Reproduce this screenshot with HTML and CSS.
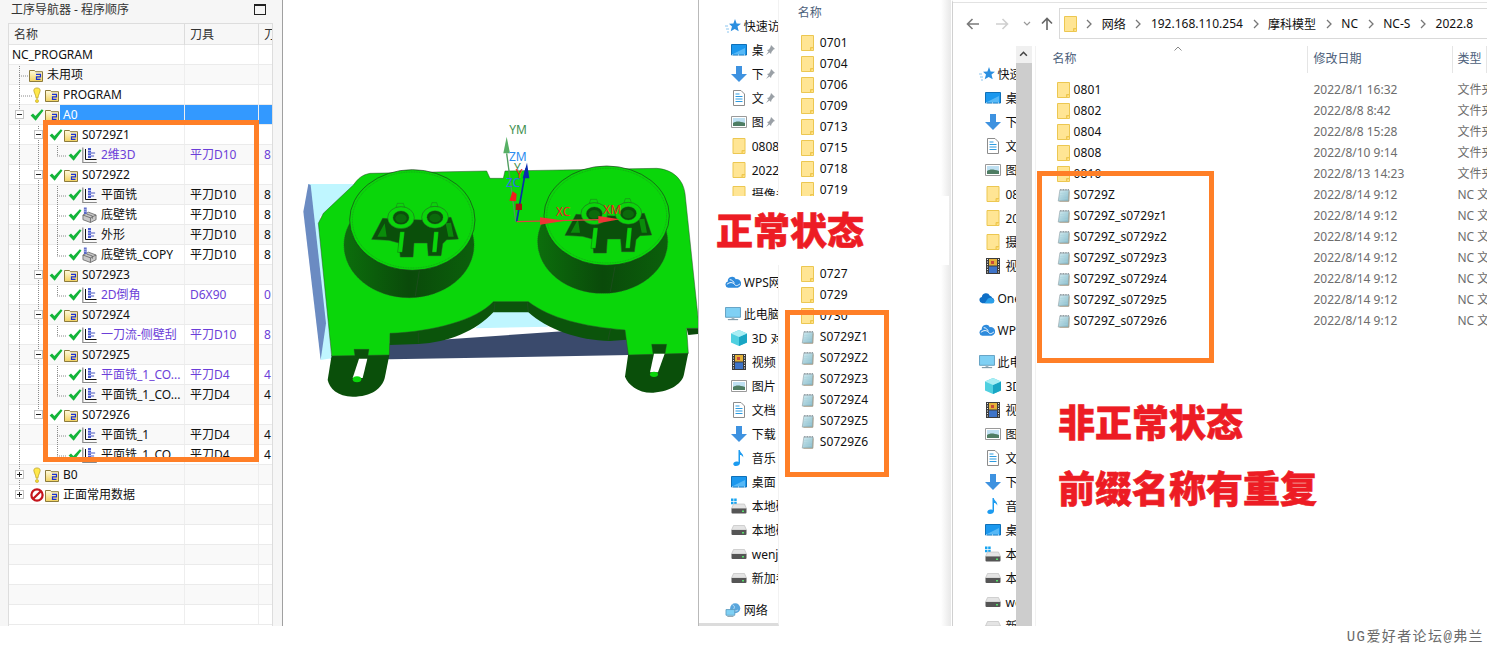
FILE: index.html
```html
<!DOCTYPE html>
<html lang="zh-CN">
<head>
    <meta charset="UTF-8">
    <title>工序导航器</title>
    <link rel="stylesheet" href="styles.css">
</head>
<body>
    <!-- shared icons -->
    <svg class="defs" width="0" height="0">
        <defs>
            <linearGradient id="nx-yellow" x1="0" y1="0" x2="0" y2="1">
                <stop offset="0" stop-color="#fffbe0"/>
                <stop offset="1" stop-color="#f2d25e"/>
            </linearGradient>
            <linearGradient id="sheet" x1="0" y1="0" x2="1" y2="1">
                <stop offset="0" stop-color="#d5edf2"/>
                <stop offset="1" stop-color="#83b8c8"/>
            </linearGradient>
            <linearGradient id="wall" x1="0" y1="0" x2="1" y2="0">
                <stop offset="0" stop-color="#0c6e0c"/>
                <stop offset=".5" stop-color="#0a4a0a"/>
                <stop offset="1" stop-color="#0b600b"/>
            </linearGradient>
            <symbol id="i-folder" viewBox="0 0 14 14">
                <path d="M.5 2.5h5l1 1.2h7v9.8H.5z" fill="url(#nx-yellow)" stroke="#8c7b3c"/>
                <path d="M7 6.3h4.5v2.6H7.5v2.5h4" fill="none" stroke="#1a2fd0" stroke-width="1.2"/>
            </symbol>
            <symbol id="i-check" viewBox="0 0 14 14">
                <path d="M.6 7.4 3 5.5l2.4 2.6L11.8 1.3l1.7 1.3-7.8 10.2z" fill="#14b53a"/>
            </symbol>
            <symbol id="i-warn" viewBox="0 0 8 16">
                <path d="M.8 3.2C.8.2 7.2.2 7.2 3.2c0 2.2-2 4.6-2.3 8H3.1C2.8 7.8.8 5.4.8 3.2z" fill="#ffe84a" stroke="#b59a1c" stroke-width=".7"/>
                <circle cx="4" cy="14" r="1.6" fill="#f4d92e" stroke="#b59a1c" stroke-width=".5"/>
            </symbol>
            <symbol id="i-stop" viewBox="0 0 15 15">
                <circle cx="7.5" cy="7.5" r="6" fill="#fff" stroke="#c4161c" stroke-width="2.4"/>
                <path d="M3.4 11.6 11.6 3.4" stroke="#c4161c" stroke-width="2.4"/>
            </symbol>
            <symbol id="i-op" viewBox="0 0 15 16">
                <path d="M.8.5v15h14" fill="none" stroke="#8a8a8a" stroke-width="1.2"/>
                <path d="M3.5 2v10.5h11" fill="none" stroke="#111" stroke-width="1"/>
                <path d="M6 1h3v10H6z" fill="#4b5bd0"/>
                <path d="M6 3.5h3M6 6h3M6 8.5h3M9 6h5M9 9h4" stroke="#dfe3ff" stroke-width=".7"/>
                <path d="M9 6h4M9 9h3" stroke="#2a3ab0" stroke-width=".8"/>
            </symbol>
            <symbol id="i-block" viewBox="0 0 16 16">
                <path d="M1 8 7 5l8 3v5l-6 3-8-3z" fill="#c9c9c9" stroke="#5c5c5c" stroke-width=".8"/>
                <path d="M1 8l8 3 6-3M9 11v5M5 7l6 2v3" fill="none" stroke="#5c5c5c" stroke-width=".8"/>
                <path d="M2 0h3v7H2z" fill="#5a6ac8"/>
                <path d="M2 2h3M2 4h3" stroke="#dfe3ff" stroke-width=".6"/>
            </symbol>
            <symbol id="i-dir" viewBox="0 0 13 16">
                <path d="M.5.5h12v15H.5z" fill="#ffe594" stroke="#ecc751"/>
                <path d="M9.5 15.5v-3h3" fill="#ffd45e" stroke="#ecc751"/>
            </symbol>
            <symbol id="i-nc" viewBox="0 0 16 16">
                <path d="M3.5 2H15l-.6 13.5H1.5z" fill="url(#sheet)" stroke="#8b9aa0" stroke-width=".7"/>
                <path d="M15 3.5l-.5 12.3H3" fill="none" stroke="#a3967a" stroke-width=".9"/>
                <path d="M3.6 1.5H15" stroke="#5f6f78" stroke-width="1.4" stroke-dasharray="1 1"/>
                <path d="M4 6h9M3.6 9h9.2M3.3 12h9.3" stroke="#a9d2dc" stroke-width=".7"/>
            </symbol>
            <symbol id="i-star" viewBox="0 0 16 14">
                <path d="M10 0l1.6 4.4 4.4.3-3.5 2.9 1.2 4.7L9.7 10l-4 2.3 1.3-4.7-3-2.8 4.4-.3z" fill="#2b8fe0"/>
                <path d="M0 7h3M1 10h3M2 13h2" stroke="#8cc6f0"/>
            </symbol>
            <symbol id="i-desk" viewBox="0 0 16 12">
                <path d="M.5.5h15v10.500H.5z" fill="#1b98ee" stroke="#0f70b8"/>
                <path d="M1 10.500 14 4v6.500z" fill="#57b8f6"/>
                <path d="M1 11h14" stroke="#e8f4fc" stroke-dasharray="1 5"/>
            </symbol>
            <symbol id="i-down" viewBox="0 0 16 16">
                <path d="M5 0h6v8h5l-8 8-8-8h5z" fill="#3e92e0"/>
            </symbol>
            <symbol id="i-doc" viewBox="0 0 12 16">
                <path d="M.5.5h7.500l3.500 3.500v11.500H.5z" fill="#fff" stroke="#8c8c8c"/>
                <path d="M2.500 4h4M2.500 6.500h7M2.500 9h7M2.500 11.500h7" stroke="#2d9be0"/>
            </symbol>
            <symbol id="i-pic" viewBox="0 0 16 12">
                <path d="M.5.5h15v11H.5z" fill="#fff" stroke="#9a9a9a"/>
                <path d="M2 2h12v8H2z" fill="#bfe0f2"/>
                <path d="M2 7c3-2 6-2 12 0v3H2z" fill="#4e7d63"/>
            </symbol>
            <symbol id="i-film" viewBox="0 0 14 16">
                <path d="M0 0h14v16H0z" fill="#3c3c3c"/>
                <path d="M3 1h8v6.500H3z" fill="#e4b23a"/>
                <path d="M3 8.500h8V15H3z" fill="#3f74c8"/>
                <path d="M5 3h3v3H5z" fill="#c84a3a"/>
                <path d="M1.500 1v14M12.500 1v14" stroke="#eee" stroke-dasharray="1 1.500"/>
            </symbol>
            <symbol id="i-cube" viewBox="0 0 16 16">
                <path d="M8 0l8 3.500v9L8 16l-8-3.500v-9z" fill="#4fd0e0"/>
                <path d="M8 7l8-3.500v9L8 16z" fill="#19a6c4"/>
                <path d="M8 0l8 3.500L8 7 0 3.500z" fill="#a8eef4"/>
            </symbol>
            <symbol id="i-note" viewBox="0 0 12 16">
                <path d="M5.500 0h1.300c.4 3 4 3.500 3.400 7.500C9.500 5.500 8 5 7 5v8c0 2-2 3-4 3-2.500 0-3.500-2-2-3.500 1-1 3-1.200 4.500-.5z" fill="#1c9bf0"/>
            </symbol>
            <symbol id="i-drive" viewBox="0 0 16 10">
                <path d="M2.500.5h11L15.500 5H.5z" fill="#e4e4e4" stroke="#bbb" stroke-width=".6"/>
                <path d="M.5 5h15v4a1 1 0 0 1-1 1h-13a1 1 0 0 1-1-1z" fill="#555"/>
                <path d="M11 7h2v1.500h-2z" fill="#56e06a"/>
            </symbol>
            <symbol id="i-sys" viewBox="0 0 16 15">
                <path d="M0 0h2.500v2.500H0zM3.200 0h2.500v2.500H3.200zM0 3.200h2.500v2.500H0zM3.200 3.200h2.500v2.500H3.200z" fill="#18a4f0"/>
                <path d="M2.500 5.500h11L15.500 10H.5z" fill="#e4e4e4" stroke="#bbb" stroke-width=".6"/>
                <path d="M.5 10h15v4a1 1 0 0 1-1 1h-13a1 1 0 0 1-1-1z" fill="#555"/>
                <path d="M11 12h2v1.500h-2z" fill="#56e06a"/>
            </symbol>
            <symbol id="i-pc" viewBox="0 0 17 15">
                <path d="M.5.5h16v10.500H.5z" fill="#7fd0f4" stroke="#5e9dc0"/>
                <path d="M7 11h3v2H7z" fill="#9bb4c2"/>
                <path d="M3 13.500h11" stroke="#7f98a6" stroke-width="1.200"/>
            </symbol>
            <symbol id="i-net" viewBox="0 0 17 16">
                <circle cx="11" cy="6" r="5.800" fill="#5aa6dc"/>
                <path d="M8 2c2 1 3 3 1 5s3 3 5 1" fill="none" stroke="#cfe8f8"/>
                <path d="M.5 7.500h10v6.500H.5z" fill="#7fd0f4" stroke="#5e9dc0"/>
                <path d="M2 15.500h7" stroke="#7f98a6"/>
            </symbol>
            <symbol id="i-drive-cloud" viewBox="0 0 17 11">
                <path d="M3.500 11A3.300 3.300 0 0 1 3 4.500 4.500 4.500 0 0 1 11.500 3 3.200 3.200 0 0 1 14 5.200 3 3 0 0 1 14 11z" fill="#0f6fc6"/>
                <path d="M6 11l3.500-5c2-1 4-.8 5 .2a2.500 2.500 0 0 1 0 4.800z" fill="#2ba0ea"/>
            </symbol>
            <symbol id="i-wps" viewBox="0 0 17 12">
                <path d="M3.500 12A3.300 3.300 0 0 1 3 5.500 4.500 4.500 0 0 1 11.500 3 3.800 3.800 0 0 1 13.500 12z" fill="#2e8bdc"/>
                <path d="M2 8.500c3-2.500 6-2.500 8 0s3.500 1 6-.5M5 3.500c2.500 0 4 2 5 4" fill="none" stroke="#fff"/>
            </symbol>
            <symbol id="i-pin" viewBox="0 0 10 10">
                <path d="M6 0l4 4-1.500.5L6.500 7 6 9 4.500 7.500 1 10l2.500-3.500L2 5l2-.5L5.500 2z" fill="#9aa0a6"/>
            </symbol>
            <symbol id="i-crumb" viewBox="0 0 6 10">
                <path d="M1 1l4 4-4 4" fill="none" stroke="#777" stroke-width="1.300"/>
            </symbol>
        </defs>
    </svg>

    <div class="page">
        <!-- operation navigator -->
        <section class="navigator">
            <div class="nav-title">
                <span>工序导航器 - 程序顺序</span>
                <span class="maximize"></span>
            </div>
            <div class="tree">
                <div class="tree-head">
                    <div>名称</div>
                    <div>刀具</div>
                    <div>刀</div>
                </div>
                <div class="tree-body">
                    <div class="row"><div class="name lv0"><span class="label">NC_PROGRAM</span></div><div></div><div></div></div>
                    <div class="row"><div class="name lv-bare"><svg class="folder"><use href="#i-folder"/></svg><span class="label">未用项</span></div><div></div><div></div></div>
                    <div class="row"><div class="name lv1"><span class="exp none"></span><svg class="warn"><use href="#i-warn"/></svg><svg class="folder"><use href="#i-folder"/></svg><span class="label">PROGRAM</span></div><div></div><div></div></div>
                    <div class="row selected"><div class="name lv1"><span class="exp minus"></span><svg class="status"><use href="#i-check"/></svg><svg class="folder"><use href="#i-folder"/></svg><span class="label">A0</span></div><div></div><div></div></div>

                    <div class="row"><div class="name lv2"><span class="exp minus"></span><svg class="status"><use href="#i-check"/></svg><svg class="folder"><use href="#i-folder"/></svg><span class="label">S0729Z1</span></div><div></div><div></div></div>
                    <div class="row edited"><div class="name lv3"><svg class="status"><use href="#i-check"/></svg><svg class="op"><use href="#i-op"/></svg><span class="label">2维3D</span></div><div>平刀D10</div><div>8</div></div>

                    <div class="row"><div class="name lv2"><span class="exp minus"></span><svg class="status"><use href="#i-check"/></svg><svg class="folder"><use href="#i-folder"/></svg><span class="label">S0729Z2</span></div><div></div><div></div></div>
                    <div class="row"><div class="name lv3"><svg class="status"><use href="#i-check"/></svg><svg class="op"><use href="#i-op"/></svg><span class="label">平面铣</span></div><div>平刀D10</div><div>8</div></div>
                    <div class="row"><div class="name lv3"><svg class="status"><use href="#i-check"/></svg><svg class="op"><use href="#i-block"/></svg><span class="label">底壁铣</span></div><div>平刀D10</div><div>8</div></div>
                    <div class="row"><div class="name lv3"><svg class="status"><use href="#i-check"/></svg><svg class="op"><use href="#i-op"/></svg><span class="label">外形</span></div><div>平刀D10</div><div>8</div></div>
                    <div class="row"><div class="name lv3"><svg class="status"><use href="#i-check"/></svg><svg class="op"><use href="#i-block"/></svg><span class="label">底壁铣_COPY</span></div><div>平刀D10</div><div>8</div></div>

                    <div class="row"><div class="name lv2"><span class="exp minus"></span><svg class="status"><use href="#i-check"/></svg><svg class="folder"><use href="#i-folder"/></svg><span class="label">S0729Z3</span></div><div></div><div></div></div>
                    <div class="row edited"><div class="name lv3"><svg class="status"><use href="#i-check"/></svg><svg class="op"><use href="#i-op"/></svg><span class="label">2D倒角</span></div><div>D6X90</div><div>0</div></div>

                    <div class="row"><div class="name lv2"><span class="exp minus"></span><svg class="status"><use href="#i-check"/></svg><svg class="folder"><use href="#i-folder"/></svg><span class="label">S0729Z4</span></div><div></div><div></div></div>
                    <div class="row edited"><div class="name lv3"><svg class="status"><use href="#i-check"/></svg><svg class="op"><use href="#i-op"/></svg><span class="label">一刀流-侧壁刮</span></div><div>平刀D10</div><div>8</div></div>

                    <div class="row"><div class="name lv2"><span class="exp minus"></span><svg class="status"><use href="#i-check"/></svg><svg class="folder"><use href="#i-folder"/></svg><span class="label">S0729Z5</span></div><div></div><div></div></div>
                    <div class="row edited"><div class="name lv3"><svg class="status"><use href="#i-check"/></svg><svg class="op"><use href="#i-op"/></svg><span class="label">平面铣_1_CO...</span></div><div>平刀D4</div><div>4</div></div>
                    <div class="row"><div class="name lv3"><svg class="status"><use href="#i-check"/></svg><svg class="op"><use href="#i-op"/></svg><span class="label">平面铣_1_CO...</span></div><div>平刀D4</div><div>4</div></div>

                    <div class="row"><div class="name lv2"><span class="exp minus"></span><svg class="status"><use href="#i-check"/></svg><svg class="folder"><use href="#i-folder"/></svg><span class="label">S0729Z6</span></div><div></div><div></div></div>
                    <div class="row"><div class="name lv3"><svg class="status"><use href="#i-check"/></svg><svg class="op"><use href="#i-op"/></svg><span class="label">平面铣_1</span></div><div>平刀D4</div><div>4</div></div>
                    <div class="row"><div class="name lv3"><svg class="status"><use href="#i-check"/></svg><svg class="op"><use href="#i-op"/></svg><span class="label">平面铣_1_CO...</span></div><div>平刀D4</div><div>4</div></div>

                    <div class="row"><div class="name lv1"><span class="exp plus"></span><svg class="warn"><use href="#i-warn"/></svg><svg class="folder"><use href="#i-folder"/></svg><span class="label">B0</span></div><div></div><div></div></div>
                    <div class="row"><div class="name lv1"><span class="exp plus"></span><svg class="status"><use href="#i-stop"/></svg><svg class="folder"><use href="#i-folder"/></svg><span class="label">正面常用数据</span></div><div></div><div></div></div>
                    <div class="row"><div></div><div></div><div></div></div>
                    <div class="row"><div></div><div></div><div></div></div>
                    <div class="row"><div></div><div></div><div></div></div>
                    <div class="row"><div></div><div></div><div></div></div>
                    <div class="row"><div></div><div></div><div></div></div>
                    <div class="row"><div></div><div></div><div></div></div>
                </div>
                <!-- dotted connectors of the tree, in offsets from the tree corner -->
                <svg class="tree-lines" width="264" height="603">
                    <path d="M10.500 42V472M10 52h10M10 72h13M10 92h5M10 452h5M10 472h5M29.500 102V392M29 112h4M29 152h4M29 252h4M29 292h4M29 332h4M29 392h4M48.500 122V132M48 132h10M48.500 162V232M48 172h10M48 192h10M48 212h10M48 232h10M48.500 262V272M48 272h10M48.500 302V312M48 312h10M48.500 342V372M48 352h10M48 372h10M48.500 402V432M48 412h10M48 432h10" fill="none" stroke="#8a8a8a" stroke-dasharray="1 1"/>
                </svg>
            </div>
        </section>

        <!-- 3D part in the graphics window -->
        <div class="viewport">
            <svg width="415" height="626" viewBox="283 0 415 626">
                <g transform="translate(290 110) scale(.33333)">
                    <path d="M55 222H200L90 320l35 425-33 5z" fill="#bff6ff"/>
                    <path d="M55 222 40 305l52 445 16-110-46-415z" fill="#6b8bc2"/>
                    <path d="M120 745 300 700l715-50 5 85-720 13z" fill="#3a4a6c"/>
                    <path d="M556 655 610 600h105l60 50z" fill="#bff6ff"/>

                    <!-- mounting ears -->
                    <path d="M125 735 113 810c5 25 30 50 75 50 55 0 90-25 97-60l13-65z" fill="#0a4f0a"/>
                    <path d="M1015 730l-10 70c10 25 40 50 85 48 55-3 88-30 92-55l13-65z" fill="#0a4f0a"/>
                    <path d="M298 560v145l87-3c90-4 175-40 225-95h105c55 50 150 85 245 86l50-4-5-129z" fill="#0b540b"/>

                    <!-- plate -->
                    <path d="M85 340 100 310 190 225C205 205 215 195 240 190L590 183 600 205H640L645 183 1100 175C1150 178 1180 210 1185 250L1225 630V655H1190L1195 730 1015 735 1005 660C880 650 780 625 715 575H610C560 630 430 665 300 670L298 735 125 738z" fill="#0ad60a" stroke="#2c4a2c" stroke-width="1.500"/>
                    <path d="M1190 655h35v17l-30 3z" fill="#0b4a0b"/>
                    <path d="M385 668v32M962 655l-8 36M615 578l-3 28M712 578l3 28" stroke="#2c4a2c" stroke-width="1.500"/>

                    <!-- slots of the ears -->
                    <path d="M192 718h45l-5 28h-36z" fill="#0a4f0a" stroke="#2c4a2c"/>
                    <path d="M207 746h25l-14 58h-30z" fill="#fff"/>
                    <ellipse cx="201" cy="808" rx="13" ry="9" fill="#0ad60a"/>
                    <path d="M1085 703h45l-5 28h-36z" fill="#0a4f0a" stroke="#2c4a2c"/>
                    <path d="M1092 731h32l-20 56h-24z" fill="#fff"/>
                    <ellipse cx="1092" cy="793" rx="12" ry="8" fill="#0ad60a"/>

                    <!-- left boss -->
                    <ellipse cx="357" cy="405" rx="195" ry="158" fill="url(#wall)" stroke="#2c4a2c" stroke-width="1.500" stroke-dasharray="4 2"/>
                    <ellipse cx="367" cy="330" rx="188" ry="151" fill="#0ad60a" stroke="#1c3a1c" stroke-width="2"/>
                    <ellipse cx="367" cy="330" rx="180" ry="144" fill="none" stroke="#2c5a2c" stroke-dasharray="3 2"/>
                    <path d="M388 482l-12 76" stroke="#2c4a2c" stroke-width="1.500"/>
                    <g id="gear">
                        <path d="M245 388 278 325l30 2 85 3 90-8 22 65-35 2-12 12-5 36h-38l-3-38h-40l-3 42h-38l-4-42-30-8z" fill="#0a4f0a" stroke="#2c4a2c" stroke-width="1.500"/>
                        <path d="M330 365h14l-7 62h-14zM432 365h14l-6 62h-14z" fill="#0ad60a" stroke="#123a12"/>
                        <path d="M262 380 284 340l6 40zM475 380l-8-40 16-2 8 42z" fill="#0ad60a" opacity=".45"/>
                        <path d="M318 292l4-12h18l4 12zM422 290l4-12h14l4 12z" fill="#0ad60a" stroke="#2c4a2c"/>
                        <ellipse cx="333" cy="323" rx="40" ry="33" fill="#0ad60a" stroke="#2c4a2c" stroke-width="1.500"/>
                        <ellipse cx="435" cy="322" rx="40" ry="33" fill="#0ad60a" stroke="#2c4a2c" stroke-width="1.500"/>
                        <ellipse cx="333" cy="323" rx="24" ry="20" fill="#0a4f0a" stroke="#2c4a2c"/>
                        <ellipse cx="435" cy="322" rx="24" ry="20" fill="#0a4f0a" stroke="#2c4a2c"/>
                        <ellipse cx="333" cy="325" rx="17" ry="13" fill="#0b6a0b"/>
                        <ellipse cx="435" cy="324" rx="17" ry="13" fill="#0b6a0b"/>
                    </g>

                    <!-- right boss -->
                    <ellipse cx="938" cy="395" rx="195" ry="155" fill="url(#wall)" stroke="#2c4a2c" stroke-width="1.500" stroke-dasharray="4 2"/>
                    <ellipse cx="950" cy="317" rx="188" ry="149" fill="#0ad60a" stroke="#1c3a1c" stroke-width="2"/>
                    <ellipse cx="950" cy="317" rx="180" ry="142" fill="none" stroke="#2c5a2c" stroke-dasharray="3 2"/>
                    <path d="M975 470l-14 76" stroke="#2c4a2c" stroke-width="1.500"/>
                    <use href="#gear" x="580" y="-12"/>

                    <!-- coordinate systems -->
                    <path d="M677 335 650 130" stroke="#4f9c5f" stroke-width="4"/>
                    <path d="M650 80 640 130h20z" fill="#57b065"/>
                    <path d="M680 335 708 175" stroke="#0a2ab0" stroke-width="5"/>
                    <path d="M711 158 698 205h20z" fill="#0a2ab0"/>
                    <path d="M680 335 960 328" stroke="#e04040" stroke-width="4"/>
                    <path d="M750 322l75 10-75 12zM925 318l65 10-65 12z" fill="#ee3535"/>
                    <rect x="677" y="281" width="19" height="19" fill="#a81414"/>
                    <path d="M658 272l10-28 12 8-2 22z" fill="#f01c1c"/>
                    <text class="axis" x="658" y="72" fill="#3f8f50">YM</text>
                    <text class="axis" x="657" y="152" fill="#2c8cf0">ZM</text>
                    <text class="axis" x="672" y="186" fill="#3f8f50">Y</text>
                    <text class="axis" x="677" y="204" fill="#ee2020">Y</text>
                    <text class="axis" x="648" y="232" fill="#2c6cf0">ZC</text>
                    <text class="axis" x="798" y="318" fill="#ee2020">XC</text>
                    <text class="axis" x="940" y="312" fill="#ee2020">XM</text>
                </g>
            </svg>
        </div>

        <!-- explorer with the clean file names -->
        <section class="explorer explorer-a">
            <nav class="side side-a">
                <div class="side-row top"><svg class="ic-top"><use href="#i-star"/></svg><span>快速访问</span></div>
                <div class="side-row"><svg class="ic"><use href="#i-desk"/></svg><span class="pinned">桌</span><svg class="pin"><use href="#i-pin"/></svg></div>
                <div class="side-row"><svg class="ic"><use href="#i-down"/></svg><span class="pinned">下</span><svg class="pin"><use href="#i-pin"/></svg></div>
                <div class="side-row"><svg class="ic"><use href="#i-doc"/></svg><span class="pinned">文</span><svg class="pin"><use href="#i-pin"/></svg></div>
                <div class="side-row"><svg class="ic"><use href="#i-pic"/></svg><span class="pinned">图</span><svg class="pin"><use href="#i-pin"/></svg></div>
                <div class="side-row"><svg class="ic"><use href="#i-dir"/></svg><span>0808</span></div>
                <div class="side-row"><svg class="ic"><use href="#i-dir"/></svg><span>2022.8</span></div>
                <div class="side-row"><svg class="ic"><use href="#i-dir"/></svg><span>摄像头</span></div>
                <div class="side-row"></div>
                <div class="side-row group"></div>
                <div class="side-row top group"><svg class="ic-top"><use href="#i-wps"/></svg><span>WPS网盘</span></div>
                <div class="side-row top group"><svg class="ic-top"><use href="#i-pc"/></svg><span>此电脑</span></div>
                <div class="side-row"><svg class="ic"><use href="#i-cube"/></svg><span>3D 对象</span></div>
                <div class="side-row"><svg class="ic"><use href="#i-film"/></svg><span>视频</span></div>
                <div class="side-row"><svg class="ic"><use href="#i-pic"/></svg><span>图片</span></div>
                <div class="side-row"><svg class="ic"><use href="#i-doc"/></svg><span>文档</span></div>
                <div class="side-row"><svg class="ic"><use href="#i-down"/></svg><span>下载</span></div>
                <div class="side-row"><svg class="ic"><use href="#i-note"/></svg><span>音乐</span></div>
                <div class="side-row"><svg class="ic"><use href="#i-desk"/></svg><span>桌面</span></div>
                <div class="side-row"><svg class="ic"><use href="#i-sys"/></svg><span>本地磁盘</span></div>
                <div class="side-row"><svg class="ic"><use href="#i-drive"/></svg><span>本地磁盘</span></div>
                <div class="side-row"><svg class="ic"><use href="#i-drive"/></svg><span>wenjian</span></div>
                <div class="side-row"><svg class="ic"><use href="#i-drive"/></svg><span>新加卷</span></div>
                <div class="side-row top group"><svg class="ic-top"><use href="#i-net"/></svg><span>网络</span></div>
            </nav>
            <div class="list-a">
                <div class="list-a-head">名称</div>
                <div class="file"><svg class="file-ic"><use href="#i-dir"/></svg>0701</div>
                <div class="file"><svg class="file-ic"><use href="#i-dir"/></svg>0704</div>
                <div class="file"><svg class="file-ic"><use href="#i-dir"/></svg>0706</div>
                <div class="file"><svg class="file-ic"><use href="#i-dir"/></svg>0709</div>
                <div class="file"><svg class="file-ic"><use href="#i-dir"/></svg>0713</div>
                <div class="file"><svg class="file-ic"><use href="#i-dir"/></svg>0715</div>
                <div class="file"><svg class="file-ic"><use href="#i-dir"/></svg>0718</div>
                <div class="file"><svg class="file-ic"><use href="#i-dir"/></svg>0719</div>
                <div class="file"></div>
                <div class="file"></div>
                <div class="file"></div>
                <div class="file"><svg class="file-ic"><use href="#i-dir"/></svg>0727</div>
                <div class="file"><svg class="file-ic"><use href="#i-dir"/></svg>0729</div>
                <div class="file"><svg class="file-ic"><use href="#i-dir"/></svg>0730</div>
                <div class="file"><svg class="file-ic"><use href="#i-nc"/></svg>S0729Z1</div>
                <div class="file"><svg class="file-ic"><use href="#i-nc"/></svg>S0729Z2</div>
                <div class="file"><svg class="file-ic"><use href="#i-nc"/></svg>S0729Z3</div>
                <div class="file"><svg class="file-ic"><use href="#i-nc"/></svg>S0729Z4</div>
                <div class="file"><svg class="file-ic"><use href="#i-nc"/></svg>S0729Z5</div>
                <div class="file"><svg class="file-ic"><use href="#i-nc"/></svg>S0729Z6</div>
            </div>
        </section>

        <!-- explorer with the doubled prefix -->
        <section class="explorer explorer-b">
            <div class="toolbar">
                <svg class="nav-btn back" viewBox="0 0 14 12"><path d="M13 6H2M6.500 1 1.500 6l5 5" fill="none" stroke="#7a7a7a" stroke-width="1.600"/></svg>
                <svg class="nav-btn fwd" viewBox="0 0 14 12"><path d="M1 6h11M7.500 1l5 5-5 5" fill="none" stroke="#cfcfcf" stroke-width="1.600"/></svg>
                <svg class="nav-drop" viewBox="0 0 8 6"><path d="M1 1l3 3 3-3" fill="none" stroke="#999" stroke-width="1.200"/></svg>
                <svg class="nav-btn up" viewBox="0 0 12 14"><path d="M6 13V2M1 6.500l5-5 5 5" fill="none" stroke="#666" stroke-width="1.600"/></svg>
                <div class="address">
                    <svg class="addr-dir"><use href="#i-dir"/></svg>
                    <svg class="chev"><use href="#i-crumb"/></svg><span>网络</span>
                    <svg class="chev"><use href="#i-crumb"/></svg><span>192.168.110.254</span>
                    <svg class="chev"><use href="#i-crumb"/></svg><span>摩科模型</span>
                    <svg class="chev"><use href="#i-crumb"/></svg><span>NC</span>
                    <svg class="chev"><use href="#i-crumb"/></svg><span>NC-S</span>
                    <svg class="chev"><use href="#i-crumb"/></svg><span>2022.8</span>
                </div>
            </div>
            <div class="explorer-body">
                <nav class="side side-b">
                    <div class="side-row top"><svg class="ic-top"><use href="#i-star"/></svg><span>快速访问</span></div>
                    <div class="side-row"><svg class="ic"><use href="#i-desk"/></svg><span>桌面</span></div>
                    <div class="side-row"><svg class="ic"><use href="#i-down"/></svg><span>下载</span></div>
                    <div class="side-row"><svg class="ic"><use href="#i-doc"/></svg><span>文档</span></div>
                    <div class="side-row"><svg class="ic"><use href="#i-pic"/></svg><span>图片</span></div>
                    <div class="side-row"><svg class="ic"><use href="#i-dir"/></svg><span>0808</span></div>
                    <div class="side-row"><svg class="ic"><use href="#i-dir"/></svg><span>2022.8</span></div>
                    <div class="side-row"><svg class="ic"><use href="#i-dir"/></svg><span>摄像头</span></div>
                    <div class="side-row"><svg class="ic"><use href="#i-film"/></svg><span>视频</span></div>
                    <div class="side-row top group"><svg class="ic-top"><use href="#i-drive-cloud"/></svg><span>OneDrive</span></div>
                    <div class="side-row top group"><svg class="ic-top"><use href="#i-wps"/></svg><span>WPS网盘</span></div>
                    <div class="side-row top group"><svg class="ic-top"><use href="#i-pc"/></svg><span>此电脑</span></div>
                    <div class="side-row"><svg class="ic"><use href="#i-cube"/></svg><span>3D 对象</span></div>
                    <div class="side-row"><svg class="ic"><use href="#i-film"/></svg><span>视频</span></div>
                    <div class="side-row"><svg class="ic"><use href="#i-pic"/></svg><span>图片</span></div>
                    <div class="side-row"><svg class="ic"><use href="#i-doc"/></svg><span>文档</span></div>
                    <div class="side-row"><svg class="ic"><use href="#i-down"/></svg><span>下载</span></div>
                    <div class="side-row"><svg class="ic"><use href="#i-note"/></svg><span>音乐</span></div>
                    <div class="side-row"><svg class="ic"><use href="#i-desk"/></svg><span>桌面</span></div>
                    <div class="side-row"><svg class="ic"><use href="#i-sys"/></svg><span>本地磁盘</span></div>
                    <div class="side-row"><svg class="ic"><use href="#i-drive"/></svg><span>本地磁盘</span></div>
                    <div class="side-row"><svg class="ic"><use href="#i-drive"/></svg><span>wenjian</span></div>
                    <div class="side-row"><svg class="ic"><use href="#i-drive"/></svg><span>新加卷</span></div>
                </nav>
                <div class="scrollbar"><svg class="scroll-up" viewBox="0 0 8 5"><path d="M1 4l3-3 3 3" fill="none" stroke="#444" stroke-width="1.400"/></svg></div>
                <div class="list-b">
                    <div class="list-b-head">
                        <div class="col-name">名称<svg class="sort" viewBox="0 0 8 5"><path d="M.5 4.500 4 1l3.500 3.500" fill="none" stroke="#888"/></svg></div>
                        <div class="col-date">修改日期</div>
                        <div class="col-type">类型</div>
                    </div>
                    <div class="entry"><div class="file"><svg class="file-ic"><use href="#i-dir"/></svg>0801</div><div>2022/8/1 16:32</div><div>文件夹</div></div>
                    <div class="entry"><div class="file"><svg class="file-ic"><use href="#i-dir"/></svg>0802</div><div>2022/8/8 8:42</div><div>文件夹</div></div>
                    <div class="entry"><div class="file"><svg class="file-ic"><use href="#i-dir"/></svg>0804</div><div>2022/8/8 15:28</div><div>文件夹</div></div>
                    <div class="entry"><div class="file"><svg class="file-ic"><use href="#i-dir"/></svg>0808</div><div>2022/8/10 9:14</div><div>文件夹</div></div>
                    <div class="entry"><div class="file"><svg class="file-ic"><use href="#i-dir"/></svg>0810</div><div>2022/8/13 14:23</div><div>文件夹</div></div>
                    <div class="entry"><div class="file"><svg class="file-ic"><use href="#i-nc"/></svg>S0729Z</div><div>2022/8/14 9:12</div><div>NC 文件</div></div>
                    <div class="entry"><div class="file"><svg class="file-ic"><use href="#i-nc"/></svg>S0729Z_s0729z1</div><div>2022/8/14 9:12</div><div>NC 文件</div></div>
                    <div class="entry"><div class="file"><svg class="file-ic"><use href="#i-nc"/></svg>S0729Z_s0729z2</div><div>2022/8/14 9:12</div><div>NC 文件</div></div>
                    <div class="entry"><div class="file"><svg class="file-ic"><use href="#i-nc"/></svg>S0729Z_s0729z3</div><div>2022/8/14 9:12</div><div>NC 文件</div></div>
                    <div class="entry"><div class="file"><svg class="file-ic"><use href="#i-nc"/></svg>S0729Z_s0729z4</div><div>2022/8/14 9:12</div><div>NC 文件</div></div>
                    <div class="entry"><div class="file"><svg class="file-ic"><use href="#i-nc"/></svg>S0729Z_s0729z5</div><div>2022/8/14 9:12</div><div>NC 文件</div></div>
                    <div class="entry"><div class="file"><svg class="file-ic"><use href="#i-nc"/></svg>S0729Z_s0729z6</div><div>2022/8/14 9:12</div><div>NC 文件</div></div>
                </div>
            </div>
        </section>

        <!-- hand drawn notes on top of the windows -->
        <div class="mark mark-tree"></div>
        <div class="mark mark-good"></div>
        <div class="mark mark-bad"></div>
        <div class="note note-good"><p>正常状态</p></div>
        <div class="note note-bad">
            <p>非正常状态</p>
            <p>前缀名称有重复</p>
        </div>
    </div>

    <footer class="credit">UG爱好者论坛@弗兰</footer>
</body>
</html>
```

FILE: styles.css
```css
/* Basic Reset */
* {
    box-sizing: border-box;
    margin: 0;
    padding: 0;
}
body {
    font-family: "Noto Sans", "Noto Sans CJK SC", sans-serif;
    font-size: 12px;
    color: #111;
    background: #fff;
    overflow: hidden;
}
svg {
    display: block;
    flex: none;
}
.defs {
    position: absolute;
}
.page {
    position: relative;
    display: flex;
    height: 626px;
}

/* Operation navigator */
.navigator {
    width: 283px;
    padding-left: 8px;
    background: #f6f6f6;
    border-right: 1px solid #a0a0a0;
}
.nav-title {
    display: flex;
    align-items: center;
    justify-content: space-between;
    height: 23px;
    padding: 0 16px 5px 3px;
    color: #333;
}
.maximize {
    width: 12px;
    height: 11px;
    border: 1px solid #222;
    border-top-width: 2px;
}
.tree {
    position: relative;
    width: 265px;
    height: 603px;
    border: 1px solid #ddd;
    border-bottom: 0;
    background: #fff;
    overflow: hidden;
}
.tree-head {
    display: grid;
    grid-template-columns: 176px 74px 14px;
    height: 21px;
    line-height: 21px;
    color: #333;
    background: #f7f7f7;
    border-bottom: 1px solid #e4e4e4;
}
.tree-head div {
    padding-left: 5px;
    border-right: 1px solid #dcdcdc;
}
.tree-head div:last-child {
    border-right: 0;
}
.row {
    display: grid;
    grid-template-columns: 176px 74px 14px;
    height: 20px;
    line-height: 19px;
    border-bottom: 1px solid #ebebeb;
}
.row:nth-child(even) {
    background: #f9f9f9;
}
.row > div {
    padding-left: 5px;
    border-right: 1px solid #eee;
    white-space: nowrap;
    overflow: hidden;
}
.row > div:last-child {
    border-right: 0;
}
.row > .name {
    display: flex;
    align-items: center;
}
.row > .lv0 {
    padding-left: 0;
}
.row > .lv-bare {
    padding-left: 20px;
}
.row > .lv1 {
    padding-left: 6px;
}
.row > .lv2 {
    padding-left: 25px;
}
.row > .lv3 {
    padding-left: 59px;
}
.label {
    flex: 1;
    min-width: 0;
    height: 19px;
    margin-left: 1px;
    padding-left: 3px;
    overflow: hidden;
}
.lv0 .label {
    margin-left: 0;
}
.lv3 .label {
    margin-left: 0;
    padding-left: 4px;
}
.exp {
    position: relative;
    z-index: 1;
    width: 9px;
    height: 9px;
    margin-right: 6px;
    flex: none;
    background: #fff;
    border: 1px solid #c4c4c4;
}
.exp.none {
    visibility: hidden;
}
.exp::before {
    content: "";
    position: absolute;
    left: 1px;
    top: 3px;
    width: 5px;
    height: 1px;
    background: #222;
}
.exp.plus::after {
    content: "";
    position: absolute;
    left: 3px;
    top: 1px;
    width: 1px;
    height: 5px;
    background: #222;
}
.status {
    width: 14px;
    height: 14px;
    margin-right: 1px;
    position: relative;
}
.lv3 .status {
    margin-right: 0;
}
.warn {
    width: 8px;
    height: 16px;
    margin: 0 4px 0 3px;
}
.folder {
    width: 14px;
    height: 14px;
}
.op {
    width: 15px;
    height: 16px;
}
.edited > div {
    color: #6c3fd8;
}
.selected .label,
.selected > div:not(.name) {
    background: #3399ff;
    color: #fff;
}
.tree-lines {
    position: absolute;
    left: 0;
    top: 0;
    pointer-events: none;
}

/* Graphics window */
.viewport {
    width: 415px;
    background: #fff;
}
.axis {
    font-size: 36px;
}

/* Explorer windows */
.explorer {
    background: #fff;
    overflow: hidden;
}
.explorer-a {
    display: flex;
    width: 253px;
    border-left: 1px solid #b9b9b9;
    background: linear-gradient(to right, #fff 96%, #e8e8e8);
}
.explorer-b {
    width: 536px;
    margin-left: 1px;
    border-left: 1px solid #d0d0d0;
    border-top: 2px solid transparent;
}
.side {
    flex: none;
    background: #fff;
    overflow: hidden;
}
.side-a {
    width: 80px;
    padding: 14px 0 0;
    border-right: 1px solid #f2f2f2;
    border-bottom: 3px solid #dcdcdc;
}
.side-b {
    width: 63px;
    padding-top: 16px;
}
.side-row {
    display: flex;
    align-items: center;
    height: 24px;
    padding-left: 32px;
    white-space: nowrap;
}
.side-row.top {
    padding-left: 26px;
}
.side-row.group {
    margin-top: 8px;
}
.side-row span {
    margin-left: 5px;
}
.side-row .pinned {
    width: 14px;
    overflow: hidden;
}
.side-row.top span {
    margin-left: 3px;
}
.ic {
    width: 16px;
    height: 16px;
}
.ic-top {
    width: 16px;
    height: 14px;
}
.pin {
    width: 10px;
    height: 10px;
    margin-left: -1px;
}

.list-a {
    flex: 1;
    padding-left: 22px;
    position: relative;
}
.list-a-head {
    height: 32px;
    padding: 3px 0 0 0;
    margin-left: -3px;
    color: #4c607a;
}
.file {
    display: flex;
    align-items: center;
    gap: 6px;
    height: 21px;
    white-space: nowrap;
    letter-spacing: .1px;
}
.file-ic {
    width: 13px;
    height: 16px;
    overflow: visible;
}

.toolbar {
    display: flex;
    align-items: center;
    height: 44px;
    padding: 5px 0 7px 13px;
    border-top: 1px solid #e2e2e2;
}
.nav-btn {
    width: 14px;
    height: 14px;
}
.fwd {
    margin-left: 15px;
}
.nav-drop {
    width: 8px;
    height: 6px;
    margin-left: 14px;
}
.up {
    width: 12px;
    margin-left: 10px;
}
.address {
    display: flex;
    align-items: center;
    gap: 9.6px;
    flex: 1;
    height: 31px;
    margin-left: 6px;
    padding-left: 4px;
    border: 1px solid #d9d9d9;
    border-right: 0;
    white-space: nowrap;
}
.addr-dir {
    width: 13px;
    height: 16px;
}
.chev {
    width: 6px;
    height: 10px;
}
.explorer-body {
    display: flex;
    height: 580px;
}
.scrollbar {
    flex: none;
    width: 16px;
    background: linear-gradient(#f0f0f0 17px, #cdcdcd 17px);
    margin-right: 3px;
}
.scroll-up {
    width: 9px;
    height: 6px;
    margin: 5px 0 0 3px;
}
.list-b {
    flex: 1;
    padding-left: 17px;
    border-left: 1px solid #f2f2f2;
    overflow: hidden;
}
.list-b-head {
    display: grid;
    grid-template-columns: 255px 145px 1fr;
    height: 33px;
    color: #4c607a;
}
.list-b-head > div {
    position: relative;
    height: 27px;
    line-height: 26px;
    border-right: 1px solid #e5e5e5;
}
.col-date {
    padding-left: 6px;
}
.col-type {
    padding-left: 5px;
}
.sort {
    position: absolute;
    left: 121px;
    top: 0;
    width: 8px;
    height: 5px;
}
.entry {
    display: grid;
    grid-template-columns: 257px 144px 1fr;
    height: 21px;
    line-height: 21px;
    color: #6d6d6d;
    margin-left: 4px;
    white-space: nowrap;
}
.entry .file {
    gap: 4px;
    color: #111;
}

/* Annotation boxes and labels */
.mark {
    position: absolute;
    border: 5px solid #ff7f27;
}
.mark-tree {
    left: 43px;
    top: 120px;
    width: 216px;
    height: 342px;
}
.mark-good {
    left: 785px;
    top: 310px;
    width: 104px;
    height: 167px;
}
.mark-bad {
    left: 1037px;
    top: 171px;
    width: 177px;
    height: 192px;
}
.note {
    position: absolute;
    font-family: "Noto Sans CJK SC", sans-serif;
    font-size: 37px;
    font-weight: 900;
    line-height: 37px;
    color: #ed1c24;
    -webkit-text-stroke: .6px #ed1c24;
    white-space: nowrap;
}
.note-good {
    left: 699px;
    top: 196px;
    width: 250px;
    height: 69px;
    padding: 15px 0 0 17px;
    background: #fff;
}
.note-bad {
    left: 1058px;
    top: 403px;
}
.note-bad p + p {
    margin-top: 29px;
}

.credit {
    height: 22px;
    padding-right: 3px;
    font-family: "Liberation Mono", "Noto Sans CJK SC", monospace;
    font-size: 14px;
    line-height: 22px;
    letter-spacing: 1.400px;
    color: #6a6a6a;
    text-align: right;
}
```
